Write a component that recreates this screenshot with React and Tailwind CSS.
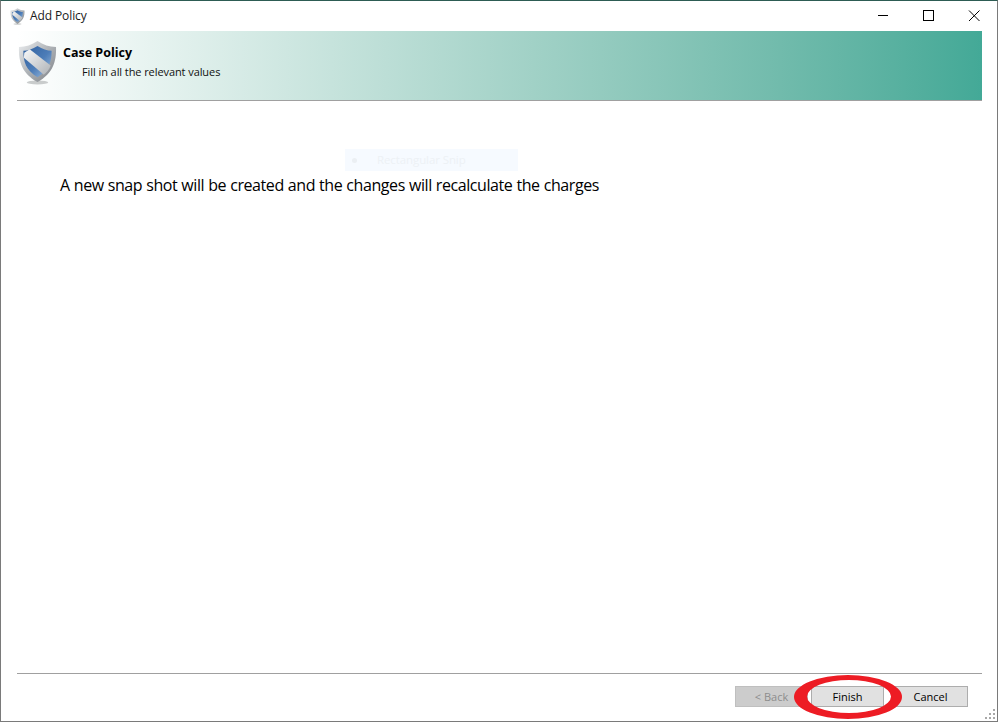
function Shield({ w, h, id }) {
  return (
    <svg width={w} height={h} viewBox="0 0 40 46" className="shrink-0">
      <defs>
        <linearGradient id={`rim${id}`} x1="0" y1="0" x2="1" y2="1">
          <stop offset="0" stopColor="#eceef0" />
          <stop offset="0.45" stopColor="#b4b8bc" />
          <stop offset="1" stopColor="#7b7f84" />
        </linearGradient>
        <linearGradient id={`blue${id}`} x1="0" y1="0" x2="1" y2="1">
          <stop offset="0" stopColor="#2f5f9e" />
          <stop offset="0.55" stopColor="#4d7db8" />
          <stop offset="1" stopColor="#a5c3e2" />
        </linearGradient>
        <linearGradient id={`band${id}`} x1="0" y1="0" x2="1" y2="1">
          <stop offset="0" stopColor="#f7f8f9" />
          <stop offset="1" stopColor="#aeb2b6" />
        </linearGradient>
      </defs>
      <ellipse cx="20" cy="43.5" rx="11" ry="2" fill="#c9cccc" />
      <path d="M20 1 C26 5 32 7 39 7 C39.5 22 36 34 20 43 C4 34 0.5 22 1 7 C8 7 14 5 20 1Z" fill={`url(#rim${id})`} />
      <path d="M20 6 C25 9 30 11 34.5 11 C34.5 22 32 31 20 38 C8 31 5.5 22 5.5 11 C10 11 15 9 20 6Z" fill={`url(#blue${id})`} />
      <path d="M6.5 13 L12 9.5 L33.5 26 C32 30.5 29 33.5 26.5 35.5 L6 18Z" fill={`url(#band${id})`} />
    </svg>
  );
}

function Btn({ label, disabled, className }) {
  return (
    <div
      className={`h-[21px] flex items-center justify-center border text-[11px] leading-none ${
        disabled ? "bg-[#cccccc] border-[#bfbfbf] text-[#8c8c8c]" : "bg-[#e1e1e1] border-[#adadad] text-black"
      } ${className}`}
    >
      {label}
    </div>
  );
}

export default function App() {
  return (
    <div className="relative w-[998px] h-[722px] flex flex-col bg-white border-x border-b border-x-[#7a7a7a] border-b-[#7a7a7a] border-t border-t-[#2d5c54] font-['Open_Sans','Noto_Sans',sans-serif] overflow-hidden">
      <div className="h-[30px] shrink-0 flex items-center pl-[9px]">
        <Shield w={15} h={17} id="s" />
        <span className="ml-[5px] text-[12px] leading-none text-[#1a1a1a] tracking-[-0.1px]">Add Policy</span>
        <div className="ml-auto flex items-center text-black">
          <svg width="46" height="30" viewBox="0 0 46 30"><path d="M19 14.5h10" stroke="#000" strokeWidth="1" /></svg>
          <svg width="46" height="30" viewBox="0 0 46 30"><rect x="18.5" y="9.5" width="10" height="10" fill="none" stroke="#000" /></svg>
          <svg width="46" height="30" viewBox="0 0 46 30"><path d="M18 9.5l10.5 10.5M28.5 9.5L18 20" stroke="#000" fill="none" /></svg>
        </div>
      </div>

      <div className="ml-[16px] mr-[15px] h-[70px] shrink-0 flex items-start border-b border-b-[#a0a0a0] bg-gradient-to-r from-white to-[#43a997]">
        <div className="ml-[1px] mt-[9px]"><Shield w={39} h={45} id="l" /></div>
        <div className="ml-[6px] mt-[14px]">
          <div className="text-[12.5px] leading-[16px] font-bold text-black">Case Policy</div>
          <div className="ml-[19px] mt-[3px] text-[11px] leading-[16px] text-[#111] tracking-[-0.08px]">Fill in all the relevant values</div>
        </div>
      </div>

      <div className="relative flex-1 pl-[59px] pt-[73px]">
        <p className="text-[16px] leading-[22px] text-black tracking-[-0.42px] [word-spacing:0.3px]">A new snap shot will be created and the changes will recalculate the charges</p>
        <div className="absolute left-[344px] top-[48px] w-[173px] h-[22px] bg-[#f6faff] flex items-center">
          <span className="ml-[7px] w-[5px] h-[5px] rounded-full bg-[#ebeff3]" />
          <span className="ml-[20px] text-[11.5px] leading-none text-[#edf1f5] tracking-[-0.1px]">Rectangular Snip</span>
        </div>
      </div>

      <div className="ml-[16px] mr-[15px] h-[48px] shrink-0 border-t border-t-[#a0a0a0] flex items-start justify-end pr-[14px] pt-[12px]">
        <Btn label="< Back" disabled className="w-[73px]" />
        <Btn label="Finish" className="w-[73px] ml-[3px]" />
        <Btn label="Cancel" className="w-[75px] ml-[9px]" />
      </div>

      <svg className="absolute left-[792px] top-[672px]" width="112" height="48" viewBox="0 0 112 48">
        <path
          fillRule="evenodd"
          fill="#ed1c24"
          d="M1 24a54 22 0 1 0 108 0a54 22 0 1 0 -108 0Z M14 23.5a42 16.5 0 1 0 84 0a42 16.5 0 1 0 -84 0Z"
        />
      </svg>
      <svg className="absolute right-[1px] bottom-[1px]" width="12" height="12" viewBox="0 0 12 12" fill="#a8a8a8">
        <rect x="9" y="1" width="2" height="2" /><rect x="9" y="5" width="2" height="2" /><rect x="5" y="5" width="2" height="2" />
        <rect x="9" y="9" width="2" height="2" /><rect x="5" y="9" width="2" height="2" /><rect x="1" y="9" width="2" height="2" />
      </svg>
    </div>
  );
}
